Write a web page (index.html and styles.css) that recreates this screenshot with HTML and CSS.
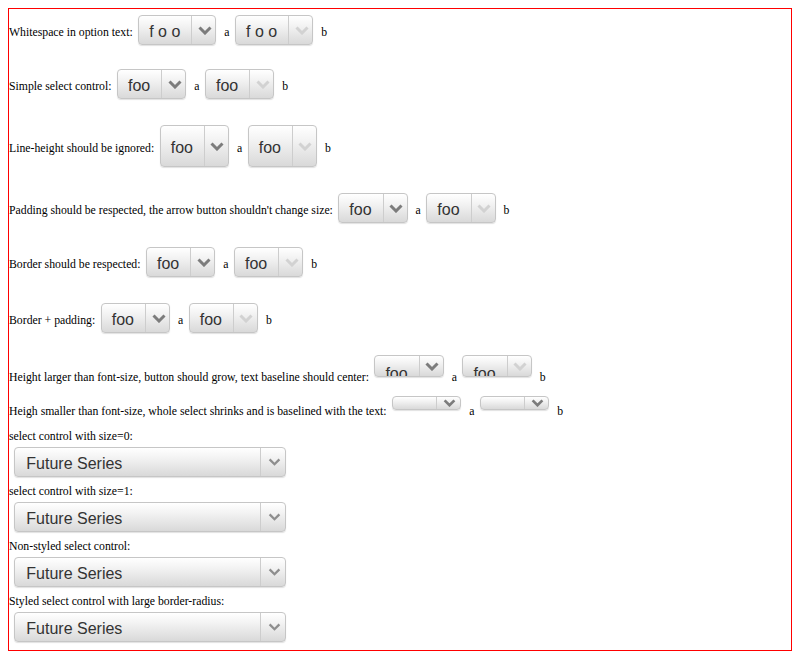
FILE: index.html
```html
<!DOCTYPE html>
<html>
<head>
<meta charset="utf-8">
<link rel="stylesheet" href="styles.css">
</head>
<body>
<div class="frame">
  <div class="row r1">
    <span class="t">Whitespace in option text:</span>
    <div class="sel"><span class="lbl">f o o</span><span class="arr"><svg class="chev" viewBox="0 0 14 9"><polyline points="1.5,1.5 7,7 12.5,1.5"/></svg></span></div>
    <span class="t">a</span>
    <div class="sel dis"><span class="lbl">f o o</span><span class="arr"><svg class="chev" viewBox="0 0 14 9"><polyline points="1.5,1.5 7,7 12.5,1.5"/></svg></span></div>
    <span class="t">b</span>
  </div>
  <div class="row r2">
    <span class="t">Simple select control:</span>
    <div class="sel"><span class="lbl">foo</span><span class="arr"><svg class="chev" viewBox="0 0 14 9"><polyline points="1.5,1.5 7,7 12.5,1.5"/></svg></span></div>
    <span class="t">a</span>
    <div class="sel dis"><span class="lbl">foo</span><span class="arr"><svg class="chev" viewBox="0 0 14 9"><polyline points="1.5,1.5 7,7 12.5,1.5"/></svg></span></div>
    <span class="t">b</span>
  </div>
  <div class="row r3">
    <span class="t t3">Line-height should be ignored:</span>
    <div class="sel tall"><span class="lbl">foo</span><span class="arr"><svg class="chev" viewBox="0 0 14 9"><polyline points="1.5,1.5 7,7 12.5,1.5"/></svg></span></div>
    <span class="t t3">a</span>
    <div class="sel tall dis"><span class="lbl">foo</span><span class="arr"><svg class="chev" viewBox="0 0 14 9"><polyline points="1.5,1.5 7,7 12.5,1.5"/></svg></span></div>
    <span class="t t3">b</span>
  </div>
  <div class="row r4">
    <span class="t">Padding should be respected, the arrow button shouldn't change size:</span>
    <div class="sel"><span class="lbl">foo</span><span class="arr"><svg class="chev" viewBox="0 0 14 9"><polyline points="1.5,1.5 7,7 12.5,1.5"/></svg></span></div>
    <span class="t">a</span>
    <div class="sel dis"><span class="lbl">foo</span><span class="arr"><svg class="chev" viewBox="0 0 14 9"><polyline points="1.5,1.5 7,7 12.5,1.5"/></svg></span></div>
    <span class="t">b</span>
  </div>
  <div class="row r5">
    <span class="t">Border should be respected:</span>
    <div class="sel"><span class="lbl">foo</span><span class="arr"><svg class="chev" viewBox="0 0 14 9"><polyline points="1.5,1.5 7,7 12.5,1.5"/></svg></span></div>
    <span class="t">a</span>
    <div class="sel dis"><span class="lbl">foo</span><span class="arr"><svg class="chev" viewBox="0 0 14 9"><polyline points="1.5,1.5 7,7 12.5,1.5"/></svg></span></div>
    <span class="t">b</span>
  </div>
  <div class="row r6">
    <span class="t">Border + padding:</span>
    <div class="sel"><span class="lbl">foo</span><span class="arr"><svg class="chev" viewBox="0 0 14 9"><polyline points="1.5,1.5 7,7 12.5,1.5"/></svg></span></div>
    <span class="t">a</span>
    <div class="sel dis"><span class="lbl">foo</span><span class="arr"><svg class="chev" viewBox="0 0 14 9"><polyline points="1.5,1.5 7,7 12.5,1.5"/></svg></span></div>
    <span class="t">b</span>
  </div>
  <div class="row r7">
    <span class="t t7">Height larger than font-size, button should grow, text baseline should center:</span>
    <div class="sel h22"><span class="lbl">foo</span><span class="arr"><svg class="chev" viewBox="0 0 14 9"><polyline points="1.5,1.5 7,7 12.5,1.5"/></svg></span></div>
    <span class="t t7">a</span>
    <div class="sel h22 dis"><span class="lbl">foo</span><span class="arr"><svg class="chev" viewBox="0 0 14 9"><polyline points="1.5,1.5 7,7 12.5,1.5"/></svg></span></div>
    <span class="t t7">b</span>
  </div>
  <div class="row r8">
    <span class="t t8">Heigh smaller than font-size, whole select shrinks and is baselined with the text:</span>
    <div class="sel h14"><span class="lbl">foo</span><span class="arr"><svg class="chev" viewBox="0 0 14 9"><polyline points="1.5,1.5 7,7 12.5,1.5"/></svg></span></div>
    <span class="t t8">a</span>
    <div class="sel h14"><span class="lbl">foo</span><span class="arr"><svg class="chev" viewBox="0 0 14 9"><polyline points="1.5,1.5 7,7 12.5,1.5"/></svg></span></div>
    <span class="t t8">b</span>
  </div>
  <div class="blk">
    <div class="cap">select control with size=0:</div>
    <div class="sel big"><span class="lbl">Future Series</span><span class="arr"><svg class="chev" viewBox="0 0 14 9"><polyline points="1.5,1.5 7,7 12.5,1.5"/></svg></span></div>
  </div>
  <div class="blk">
    <div class="cap">select control with size=1:</div>
    <div class="sel big"><span class="lbl">Future Series</span><span class="arr"><svg class="chev" viewBox="0 0 14 9"><polyline points="1.5,1.5 7,7 12.5,1.5"/></svg></span></div>
  </div>
  <div class="blk">
    <div class="cap">Non-styled select control:</div>
    <div class="sel big"><span class="lbl">Future Series</span><span class="arr"><svg class="chev" viewBox="0 0 14 9"><polyline points="1.5,1.5 7,7 12.5,1.5"/></svg></span></div>
  </div>
  <div class="blk">
    <div class="cap">Styled select control with large border-radius:</div>
    <div class="sel big"><span class="lbl">Future Series</span><span class="arr"><svg class="chev" viewBox="0 0 14 9"><polyline points="1.5,1.5 7,7 12.5,1.5"/></svg></span></div>
  </div>
</div>
</body>
</html>
```

FILE: styles.css
```css
body {
  margin: 8px;
  font-family: "Liberation Serif", "Times New Roman", serif;
  font-size: 11.75px;
  color: #000;
  background: #fff;
}

.frame {
  border: 1px solid #ff0000;
  padding-bottom: 1px;
}

.row {
  display: flex;
  align-items: flex-start;
}

.r1 { height: 54px; }
.r2 { height: 56px; }
.r3 { height: 68px; }
.r4 { height: 54px; }
.r5 { height: 56px; }
.r6 { height: 52px; }
.r7 { height: 41px; }
.r8 { height: 39px; }

.t {
  line-height: 16px;
  margin-top: 16px;
  white-space: nowrap;
}
.t3 { margin-top: 22px; }
.t7 { margin-top: 21px; }
.t8 { margin-top: 14px; }

.sel {
  display: flex;
  flex: none;
  box-sizing: border-box;
  height: 30px;
  margin: 6px 8px 0 5.5px;
  border: 1px solid #c6c6c6;
  border-radius: 4px;
  background: linear-gradient(#ffffff, #f3f3f3 35%, #d9d9d9);
  box-shadow: 0 1px 1px rgba(0, 0, 0, 0.12);
  overflow: hidden;
  font-family: "Liberation Sans", Arial, sans-serif;
  font-size: 16px;
  color: #333;
}

.lbl {
  padding: 2px 11px 0 10px;
  line-height: 28px;
  white-space: pre;
}

.arr {
  flex: none;
  width: 23px;
  border-left: 1px solid #cdcdcd;
  display: flex;
  align-items: center;
  justify-content: center;
}

.chev {
  width: 14px;
  height: 9px;
  margin-left: 2px;
  fill: none;
  stroke: #7c7c7c;
  stroke-width: 3;
}

.dis .chev {
  stroke: #d2d2d2;
}

.tall {
  height: 42px;
}
.tall .lbl {
  line-height: 40px;
}

.h22 {
  height: 22px;
}
.h22 .lbl {
  padding-top: 3.5px;
}

.h14 {
  height: 14px;
}
.h14 .lbl {
  padding-top: 10px;
}
.h14 .chev {
  width: 13px;
  height: 8px;
}

.blk .cap {
  line-height: 16px;
}

.big {
  width: 272px;
  margin: 2px 0 7px 5.3px;
}
.big .lbl {
  flex: 1;
  padding-left: 11px;
}
.big .arr {
  width: 24px;
}
.big .chev {
  width: 13px;
  height: 8px;
  stroke: #8e8e8e;
  stroke-width: 2.6;
}
```
